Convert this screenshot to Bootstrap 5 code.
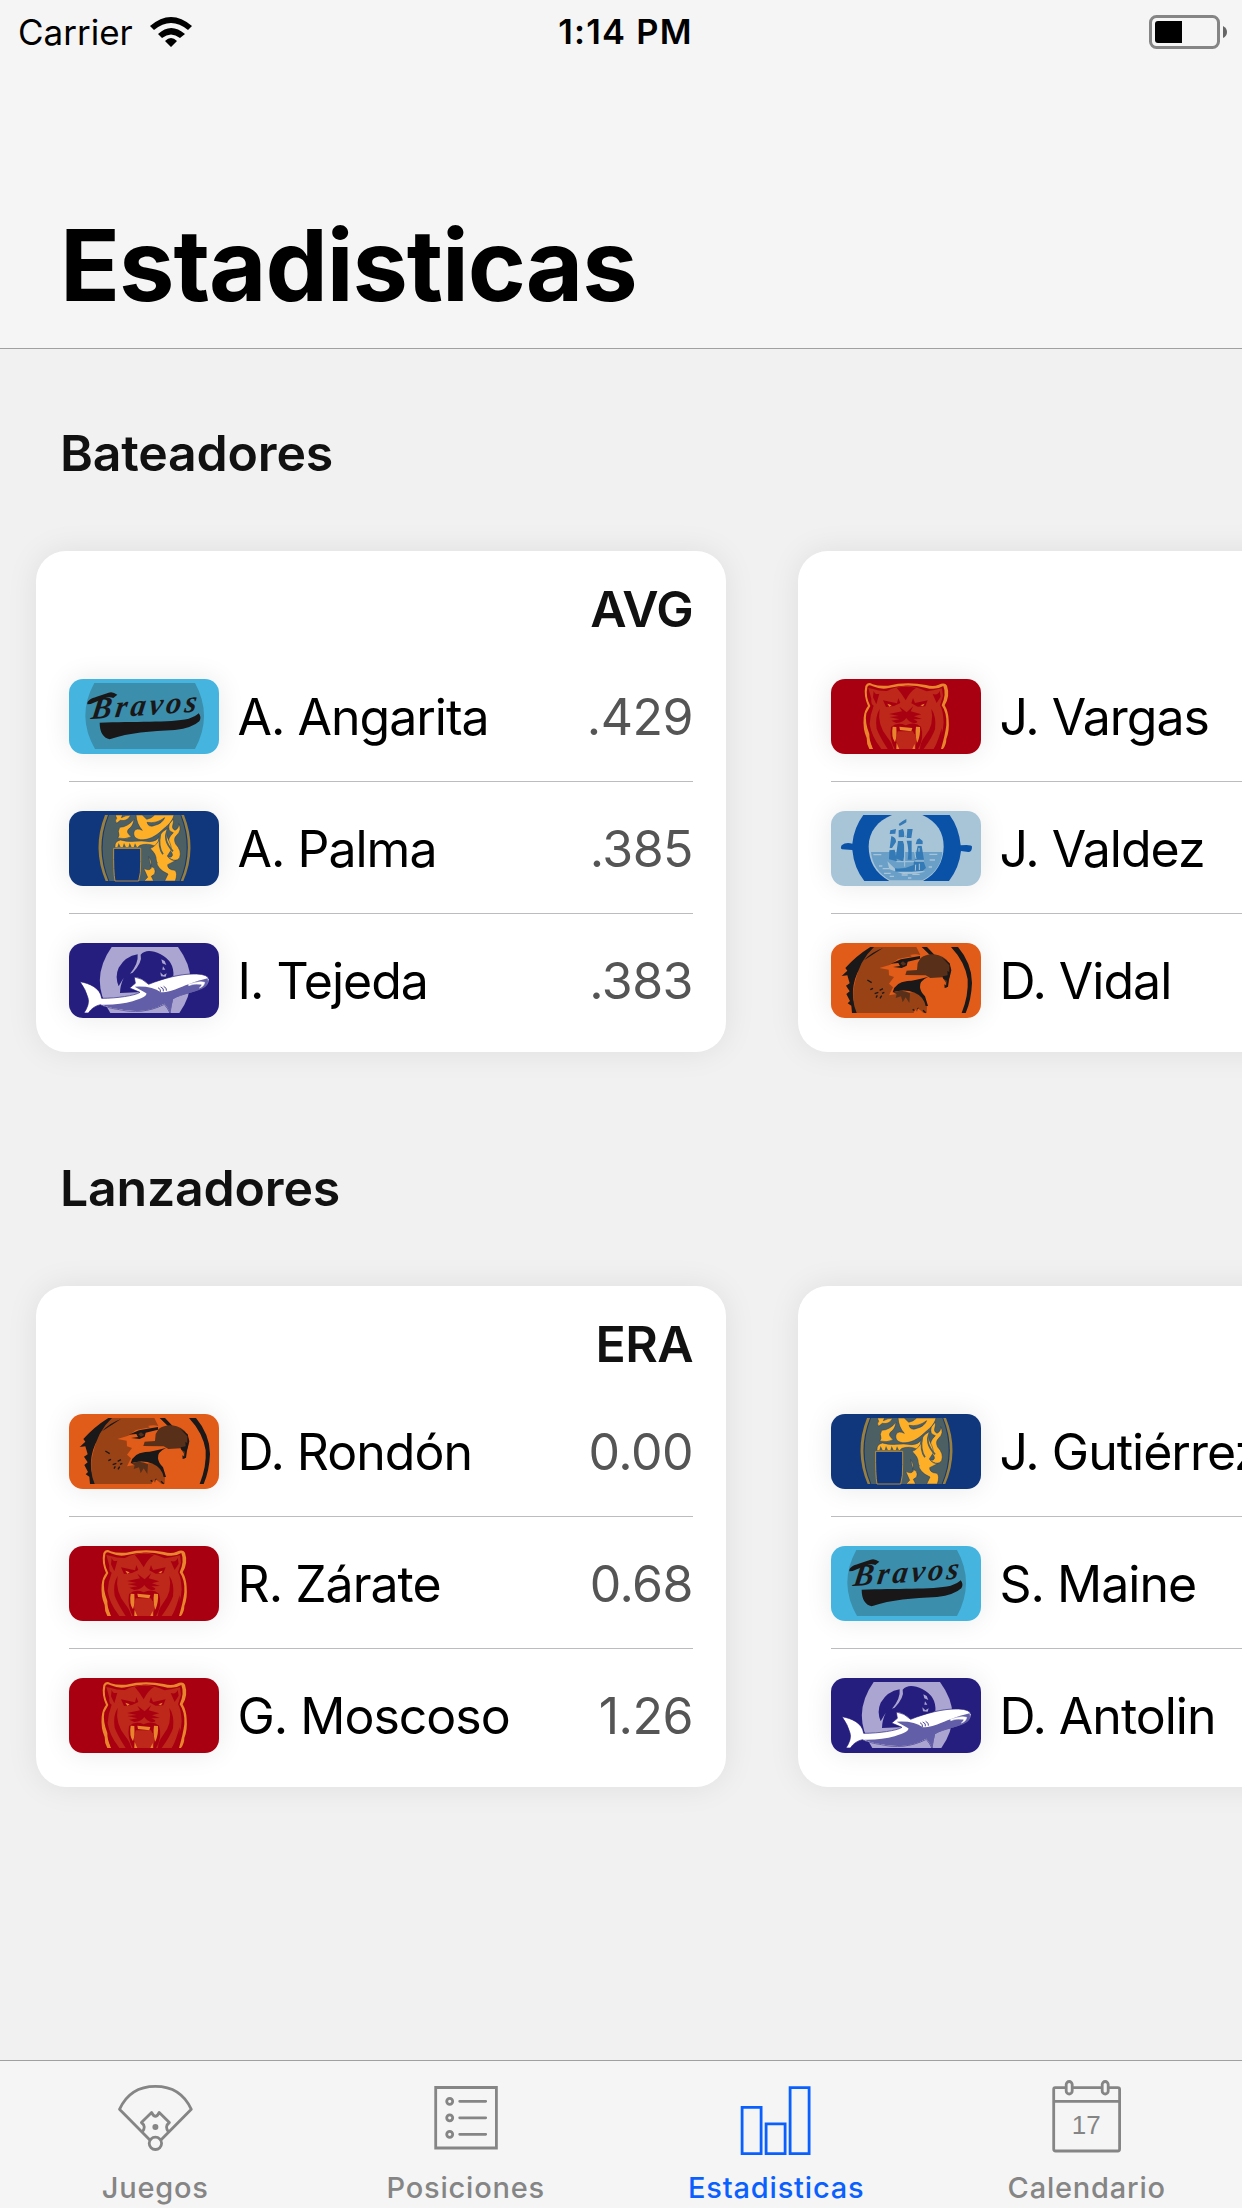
<!DOCTYPE html>
<html lang="es">
<head>
<meta charset="utf-8">
<meta name="viewport" content="width=device-width, initial-scale=1">
<title>Estadisticas</title>
<link href="https://cdn.jsdelivr.net/npm/bootstrap@5.3.0/dist/css/bootstrap.min.css" rel="stylesheet">
<style>
  body { font-family: Inter, "Liberation Sans", sans-serif; background: #f1f1f1; color: #000; width: 1242px; height: 2208px; overflow: hidden; font-feature-settings: "calt" 0; }
  .top-area { height: 349px; background: #f5f5f5; border-bottom: 1px solid #a0a0a0; }
  .status-line { height: 60px; padding: 3px 14px 0 18px; font-size: 35px; line-height: 60px; }
  .status-line .side { width: 300px; }
  .clock { font-weight: 600; font-size: 34.5px; letter-spacing: 1.2px; padding-left: 5px; }
  .page-title { font-size: 99px; font-weight: 700; line-height: 120px; letter-spacing: -1.1px; margin: 145px 0 0 60px; }
  .group-title { font-size: 50px; font-weight: 600; line-height: 60px; letter-spacing: -.2px; color: #111; margin: 0; padding-left: 60px; }
  .group-first { padding-top: 74px; }
  .group-next { padding-top: 106px; }
  .deck { gap: 72px; padding: 68px 0 0 36px; }
  .stat-card { width: 690px; height: 501px; border: 0; border-radius: 30px; padding: 0 33px; box-shadow: 0 0 32px rgba(0,0,0,.08); }
  .stat-head { height: 99px; padding-top: 16px; font-size: 50px; font-weight: 600; line-height: 84px; letter-spacing: -.6px; color: #111; }
  .stat-row { height: 132px; padding-top: 2px; border-bottom: 1px solid #bcbcc0; font-size: 50px; line-height: 60px; letter-spacing: -1px; }
  .stat-row:last-child { border-bottom: 0; padding-top: 1px; }
  .flag { width: 150px; height: 75px; border-radius: 14px; margin-right: 18.500px; box-shadow: 0 0 28px rgba(0,0,0,.09); }
  .stat-value { color: #555; letter-spacing: -.5px; }
  .tabs { height: 148px; background: #f5f5f5; border-top: 1px solid #a0a0a0; color: #858585; }
  .tabs a { color: inherit; text-decoration: none; font-size: 29px; font-weight: 500; line-height: 36px; letter-spacing: .8px; flex: 1 1 0; }
  .tabs a.active { color: #0a60ff; }
  .tabs svg { width: 90px; height: 90px; margin: 11px 0 8px; fill: none; stroke: currentColor; stroke-width: 2.8; }
</style>
<script src="https://cdn.jsdelivr.net/npm/bootstrap@5.3.0/dist/js/bootstrap.bundle.min.js"></script>
</head>
<body class="d-flex flex-column">
<svg width="0" height="0" class="position-absolute" aria-hidden="true">
  <symbol id="bravos" viewBox="27 27 450 225">
    <rect x="27" y="27" width="450" height="225" fill="#45b5e0"/>
    <path d="M103 39H405Q459 137 405 237H105Q48 138 103 39Z" fill="#3b8eac"/>
    <text x="0" y="0" transform="translate(91 147) rotate(-4) skewX(-12)" font-family="Liberation Serif, serif" font-style="italic" font-weight="700" font-size="92" textLength="316" lengthAdjust="spacing" fill="#1a1718">Bravos</text>
    <path d="M82 103C80 91 94 85 110 80L146 68Q157 63 172 74L160 84Q146 78 128 87L92 102Z" fill="#1a1718"/>
    <path d="M119 158C220 154 330 158 386 146Q409 138 416 130Q426 142 418 154Q397 174 345 180C270 184 210 187 149 208Q119 200 119 158Z" fill="#1a1718"/>
  </symbol>
  <symbol id="leones" viewBox="27 33 450 225">
    <rect x="27" y="33" width="450" height="225" fill="#10367b"/>
    <path d="M135 45H372Q412 145 370 243H137Q95 145 135 45Z" fill="#9a803f"/>
    <path d="M144 45H364Q404 145 362 243H145Q104 145 144 45Z" fill="#17376f"/>
    <path d="M147 45H361Q400 145 359 243H148Q108 145 147 45Z" fill="#4c6063"/>
    <g fill="#fdb027" stroke="#1c3c6d" stroke-width="1.5">
      <path d="M166 45H188L184 53Q198 45 212 46Q202 65 181 61L170 70Q163 62 170 55Z"/>
      <path d="M228 45H247L260 58Q275 55 284 45H342C337 67 319 79 306 91C286 110 264 121 242 119C224 117 218 105 223 93Q229 82 247 91Q230 73 228 45ZM261 67Q266 84 285 76Q307 70 314 53Q289 72 261 67Z"/>
      <path d="M179 82Q203 81 222 58Q220 78 205 88Q197 98 214 110Q196 120 173 114Q180 108 175 94Z"/>
      <path d="M165 139Q164 124 181 120Q203 126 222 124Q247 121 269 125Q293 123 296 110Q300 124 286 139Q263 128 240 136L232 143H165Z"/>
      <path d="M340 57C343 74 330 82 345 91Q357 85 356 71Q367 90 350 106Q339 116 347 132Q366 152 359 173Q348 187 332 177L318 168Q339 177 337 162C331 148 322 148 326 130Q322 115 340 98Q321 93 328 72Z"/>
      <path d="M322 86C312 112 338 128 333 151L322 168Q333 184 349 181L323 194Q322 209 345 211Q354 219 346 243H314L324 222Q291 208 289 183Q290 161 269 145Q283 144 299 118Q297 98 322 86Z"/>
      <path d="M266 170Q279 188 271 199Q290 203 284 222L274 229L281 243H252L263 232L251 205Q268 214 274 204Z"/>
    </g>
    <path d="M324 89C307 116 326 140 339 154M301 100Q293 140 309 163M269 144Q282 172 291 190" fill="none" stroke="#4c6063" stroke-width="5"/>
    <path d="M172 142l4-13 6 13M188 142l4-13 6 13M205 142l4-13 6 13M221 142l4-12 6 12" fill="#4c6063"/>
    <path d="M161 145H242V185Q243 220 236 243H165Q160 217 161 145Z" fill="#10367b" stroke="#d39b35" stroke-width="2.5"/>
  </symbol>
  <symbol id="tiburones" viewBox="27 30 450 225">
    <rect x="27" y="30" width="450" height="225" fill="#261e7e"/>
    <path d="M155 42H354Q427 141 358 240H151Q86 140 155 42Z" fill="#aaa6d1"/>
    <path d="M233 64Q196 70 176 104Q164 130 176 160Q187 140 191 135Q180 158 180 180L250 177L340 130Q344 86 302 64Q261 44 242 65Q248 87 218 119L210 122Q236 92 233 64Z" fill="#261e7e"/>
    <path d="M304 79l10 5 5 12-12-5zM301 118l9 9 10-6-3 10-14-1zM309 100l7 10h-9z" fill="#aaa6d1"/>
    <path d="M60 146C88 151 121 164 125 196C170 196 225 188 240 178L209 165L226 151L223 132Q247 135 266 154C310 136 366 121 410 123Q443 124 447 139Q447 156 427 165C403 179 370 180 338 197Q333 220 330 240Q322 224 313 214C265 238 220 239 179 230Q139 224 121 215Q98 220 85 240H72Q90 213 84 195Q77 169 60 146Z" fill="#fff" stroke="#261e7e" stroke-width="2"/>
    <path d="M126 215Q180 216 218 205Q263 191 259 181L224 161Q277 158 302 178C345 178 368 154 443 136Q449 159 425 168C401 180 363 181 339 199Q333 223 330 240Q323 223 313 212C269 237 220 238 180 229Q143 223 126 215Z" fill="#625ea7"/>
    <path d="M386 154Q419 142 434 148Q433 160 418 165Q430 155 422 154Q400 151 386 158Z" fill="#fff" stroke="#fff" stroke-width="1.5"/>
    <path d="M294 164q10 5 7 13M302 162q11 4 8 13M311 160q11 6 8 13" fill="none" stroke="#261e7e" stroke-width="2.5"/>
  </symbol>
  <symbol id="tigres" viewBox="33 27 450 225">
    <rect x="33" y="27" width="450" height="225" fill="#a80011"/>
    <path d="M148 237Q139 221 140 204Q128 177 131 143Q133 121 144 108Q130 77 136 48Q143 33 158 43Q177 49 204 47Q259 34 318 45Q340 52 356 44Q375 36 381 47Q391 78 374 106Q385 125 386 150Q389 182 379 207Q379 224 369 237Z" fill="#e9852c"/>
    <path d="M160 237Q147 212 148 192Q134 158 139 130L151 108Q136 80 142 51Q145 42 158 49Q184 60 207 54Q263 39 316 53Q348 62 370 48Q380 72 365 106Q381 128 379 165Q376 192 363 237Z" fill="#a80011"/>
    <path d="M145 54L154 86Q152 102 161 107Q151 132 149 162Q153 197 184 237H341Q370 199 371 157Q369 119 360 106L369 78L366 55Q337 62 320 64Q290 49 257 47Q220 51 201 63Q178 64 156 56Z" fill="#bd281b"/>
    <g fill="#a80011">
      <path d="M161 62Q165 76 178 71L169 103L159 82ZM359 62Q354 77 338 72L350 99L362 80Z"/>
      <path d="M230 53Q244 69 257 91Q270 64 289 53Q256 48 230 53Z"/>
      <path d="M189 91L231 100L235 84L241 99L222 108L198 111ZM323 91L285 99L279 84L274 100L293 110L316 109Z"/>
      <path d="M238 110L260 127L280 108L272 124L304 133L282 139L306 147L280 148Q303 158 282 160Q266 156 259 144Q250 157 229 159L214 152L238 148L208 141L236 138L207 132L246 124Z"/>
      <path d="M179 116Q171 164 202 202Q217 221 220 237H203Q178 198 170 176Q164 141 179 116ZM334 116Q344 163 315 199Q300 219 300 237H311Q337 202 345 178Q350 140 334 116Z"/>
      <path d="M213 171Q232 155 257 166Q283 154 303 170Q314 204 294 237H287L285 193Q260 180 230 192L229 237H224Q207 205 213 171Z"/>
      <path d="M150 174Q160 211 179 237H159Q149 204 150 174ZM365 174Q355 211 342 237H358Q367 203 365 174Z"/>
    </g>
    <path d="M233 184H279L292 211L283 237H237L228 210Z" fill="#bd281b"/>
    <path d="M218 170L229 171Q231 202 225 217Q213 200 218 170ZM288 170L300 171Q302 196 292 218Q284 196 288 170ZM238 170L277 174L274 184L240 180ZM230 219l8 18h-9zM284 222l-7 15h8zM202 101l13 5-7 4zM301 106l13-5-5 8z" fill="#e9852c"/>
  </symbol>
  <symbol id="navegantes" viewBox="33 33 450 225">
    <rect x="33" y="33" width="450" height="225" fill="#a8c4d7"/>
    <path d="M130 45H389Q417 83 422 136Q456 133 456 140Q456 156 445 156L423 153Q418 202 387 243H133Q102 204 97 150L66 148Q60 145 65 136Q78 125 97 131Q102 82 130 45Z" fill="#0a51a8"/>
    <path d="M216 45H307C353 66 371 98 371 141C370 186 350 221 309 243H208C165 220 146 183 146 139C146 96 173 62 216 45Z" fill="#a8c4d7"/>
    <path d="M153 156H367Q364 210 307 241H211Q158 211 153 156Z" fill="#6a9fc8"/>
    <path d="M202 184L226 207H281L316 215L287 221L249 222L208 208Z" fill="#a8c4d7"/>
    <g fill="#347ab6">
      <path d="M236 72Q248 62 259 57V67Q249 73 239 78ZM211 91L228 87L226 101L209 102ZM236 91L249 87L257 111L236 112ZM262 87H278L274 114H260ZM214 108Q229 113 228 126L216 144H209ZM234 123H249Q260 152 248 184L227 175ZM260 122H275V179H263Q268 149 260 122ZM208 151L224 149L231 184L207 178ZM291 119L298 115L308 123V133H287ZM293 137H305L312 179H284ZM225 205Q254 208 281 195V185H311L318 204L307 213L275 215H226Z"/>
    </g>
    <path d="M254 85V200M229 185H282M287 135H309M286 183H312M287 194L286 212M298 191V210M297 144V155M277 119L288 177" fill="none" stroke="#a8c4d7" stroke-width="3"/>
    <path d="M160 164h24M328 163h24M329 180h16M177 198h10M188 206h20M326 201h10M192 220h20M209 229h13M245 225h18M277 223h22M264 234h10" stroke="#a8c4d7" stroke-width="4"/>
  </symbol>
  <symbol id="caribes" viewBox="33 30 450 225">
    <rect x="33" y="30" width="450" height="225" fill="#e15b19"/>
    <path d="M151 42H180L112 120Q96 156 99 194L112 240H96L94 218L83 211L90 204L79 183L89 175L78 158L89 151L82 127L65 129L82 113L76 105Q108 69 151 42Z" fill="#1a1818"/>
    <path d="M162 42H289L301 66Q288 61 269 66Q284 71 264 72L234 78L211 95L178 105L206 110L207 127L222 132L207 152L219 163L207 187L244 181L278 178Q318 183 321 217L320 240H110Q92 198 104 151Q118 82 162 42Z" fill="#994216"/>
    <path d="M189 45Q153 58 132 82Q158 65 189 45Z" fill="#1a1818"/>
    <path d="M393 42H414Q456 92 456 150Q454 201 437 240H425Q446 188 443 139Q435 87 393 42ZM305 42H321L344 66L332 68Z" fill="#1a1818"/>
    <path d="M212 92L243 79L300 69L300 77L263 86L260 98L245 105L219 102L240 99L235 90ZM218 178Q224 148 262 144Q285 143 325 131Q297 144 300 163Q301 176 315 190L324 219H317Q311 190 284 179Q253 167 218 178Z" fill="#1a1818"/>
    <path d="M256 126L260 113L291 111L293 90L302 75Q326 58 356 67Q388 77 391 105Q393 131 383 142V161L376 165L378 149L367 133L331 135L317 127Z" fill="#583019"/>
    <path d="M365 73L389 91L394 112L387 140L384 161L374 165L373 154L379 158L381 143L370 137L368 130L383 127L382 114L388 117V97Z" fill="#1a1818"/>
    <path d="M219 178Q248 167 270 181L268 210L257 193L248 208L243 190L227 195L230 184ZM241 91l8-6 10 8-10 5z" fill="#583019"/>
    <path d="M142 141l13 8M151 170l8-4M164 182l11-4M179 172l10-5M186 181l7-3M168 194l4-7M180 196l5-8M278 229l8 5M293 225l7 10M309 232l8 7" stroke="#1a1818" stroke-width="4"/>
    <path d="M281 240L285 229L291 236L295 226L310 240Z" fill="#e15b19"/>
  </symbol>
</svg>

<header class="top-area flex-shrink-0">
  <div class="status-line d-flex justify-content-between align-items-center">
    <div class="side d-flex align-items-center">
      <span>Carrier</span>
      <svg class="ms-3" width="44" height="32" viewBox="149 14 44 32"><path d="M150 24Q171 6 192 24L188 28Q171 14 154 28ZM158 32Q171 20 185 32L180 36Q171 29 162 36ZM165 39Q171 33 177 39L171 45Z"/></svg>
    </div>
    <div class="clock">1:14 PM</div>
    <div class="side d-flex justify-content-end">
      <svg width="80" height="36" viewBox="1148 12 80 36"><rect x="1150.500" y="14.500" width="68" height="31" rx="6" fill="none" stroke="#858585" stroke-width="3"/><path d="M1158 19H1182V41H1158Q1155 41 1155 38V22Q1155 19 1158 19Z"/><path d="M1223 24Q1227 26 1227 30T1223 36Z" fill="#666"/></svg>
    </div>
  </div>
  <h1 class="page-title">Estadisticas</h1>
</header>

<main class="flex-grow-1 overflow-hidden">
  <section>
    <h2 class="group-title group-first">Bateadores</h2>
    <div class="deck d-flex">
      <article class="stat-card card flex-shrink-0">
        <div class="stat-head text-end">AVG</div>
        <div class="stat-row d-flex align-items-center"><svg class="flag"><use href="#bravos"/></svg><span>A. Angarita</span><span class="stat-value ms-auto">.429</span></div>
        <div class="stat-row d-flex align-items-center"><svg class="flag"><use href="#leones"/></svg><span>A. Palma</span><span class="stat-value ms-auto">.385</span></div>
        <div class="stat-row d-flex align-items-center"><svg class="flag"><use href="#tiburones"/></svg><span>I. Tejeda</span><span class="stat-value ms-auto">.383</span></div>
      </article>
      <article class="stat-card card flex-shrink-0">
        <div class="stat-head"></div>
        <div class="stat-row d-flex align-items-center"><svg class="flag"><use href="#tigres"/></svg><span>J. Vargas</span></div>
        <div class="stat-row d-flex align-items-center"><svg class="flag"><use href="#navegantes"/></svg><span>J. Valdez</span></div>
        <div class="stat-row d-flex align-items-center"><svg class="flag"><use href="#caribes"/></svg><span>D. Vidal</span></div>
      </article>
    </div>
  </section>
  <section>
    <h2 class="group-title group-next">Lanzadores</h2>
    <div class="deck d-flex">
      <article class="stat-card card flex-shrink-0">
        <div class="stat-head text-end">ERA</div>
        <div class="stat-row d-flex align-items-center"><svg class="flag"><use href="#caribes"/></svg><span>D. Rondón</span><span class="stat-value ms-auto">0.00</span></div>
        <div class="stat-row d-flex align-items-center"><svg class="flag"><use href="#tigres"/></svg><span>R. Zárate</span><span class="stat-value ms-auto">0.68</span></div>
        <div class="stat-row d-flex align-items-center"><svg class="flag"><use href="#tigres"/></svg><span>G. Moscoso</span><span class="stat-value ms-auto">1.26</span></div>
      </article>
      <article class="stat-card card flex-shrink-0">
        <div class="stat-head"></div>
        <div class="stat-row d-flex align-items-center"><svg class="flag"><use href="#leones"/></svg><span>J. Gutiérrez</span></div>
        <div class="stat-row d-flex align-items-center"><svg class="flag"><use href="#bravos"/></svg><span>S. Maine</span></div>
        <div class="stat-row d-flex align-items-center"><svg class="flag"><use href="#tiburones"/></svg><span>D. Antolin</span></div>
      </article>
    </div>
  </section>
</main>

<nav class="tabs d-flex flex-shrink-0">
  <a href="#" class="d-flex flex-column align-items-center"><svg viewBox="110.100 2072 90 90"><path d="M150 2140L119.600 2109.300Q130 2086.300 155.500 2086.300T191.400 2109.300L161 2140" stroke-linejoin="round"/><path d="M142 2132.500Q147 2126.500 141.500 2122.500L151.700 2112.500Q155.500 2120 159.300 2112.500L169.500 2122.500Q164 2126.500 169 2132.500" stroke-linejoin="round"/><circle cx="155.500" cy="2143.300" r="6.200"/><circle cx="155.500" cy="2127" r="3" fill="currentColor" stroke="none"/></svg>Juegos</a>
  <a href="#" class="d-flex flex-column align-items-center"><svg viewBox="420.800 2072 90 90"><path d="M435.500 2087.500H496.200V2148H435.500ZM459.500 2101.300H485.500M459.500 2117.800H485.500M459.500 2134.300H485.500" stroke-linecap="round"/><circle cx="449.500" cy="2101.300" r="3"/><circle cx="449.500" cy="2117.800" r="3"/><circle cx="449.500" cy="2134.300" r="3"/></svg>Posiciones</a>
  <a href="#" class="active d-flex flex-column align-items-center"><svg viewBox="731.300 2072 90 90"><path d="M742.400 2107.400H761.400V2153.600H742.400ZM766.400 2123.900H785.400V2153.600H766.400ZM790.400 2087.600H809.400V2153.600H790.400Z"/></svg>Estadisticas</a>
  <a href="#" class="d-flex flex-column align-items-center"><svg viewBox="1041.800 2072 90 90"><path d="M1066 2087.600H1055Q1053.500 2087.600 1053.500 2089.500V2149Q1053.500 2151 1055.500 2151H1117.500Q1119.400 2151 1119.400 2149V2089.500Q1119.400 2087.600 1117.500 2087.600H1108M1072 2087.600H1102M1053.500 2101.300H1119.400"/><rect x="1066" y="2081.500" width="6" height="12.500" rx="3"/><rect x="1102" y="2081.500" width="6" height="12.500" rx="3"/><text x="1086" y="2134.300" text-anchor="middle" font-size="26" font-weight="400" letter-spacing="0" font-family="Liberation Sans, sans-serif" fill="currentColor" stroke="none">17</text></svg>Calendario</a>
</nav>
</body>
</html>
